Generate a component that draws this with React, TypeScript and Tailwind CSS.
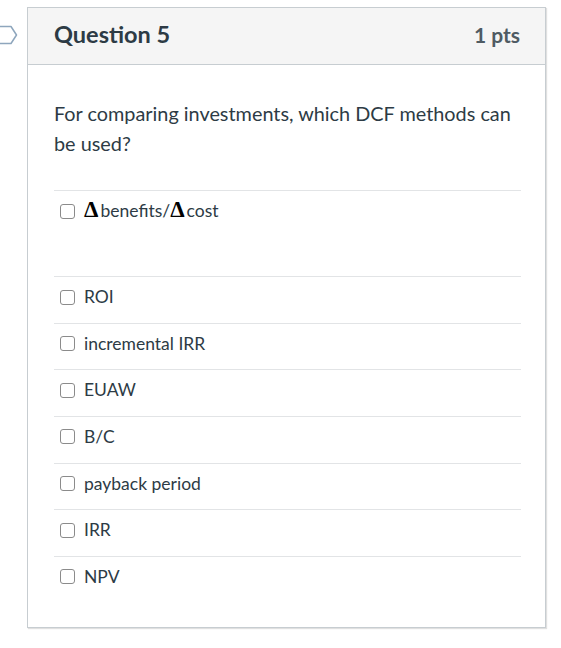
import React from "react";

/* ── Answer options ─────────────────────────────────────────────── */

const options = ["ROI", "incremental IRR", "EUAW", "B/C", "payback period", "IRR", "NPV"];

function Box() {
  return (
    <span className="inline-block h-[15px] w-[15px] shrink-0 rounded-[3px] border-[1.5px] border-[#8b8b8b] bg-white" />
  );
}

function Delta() {
  return (
    <span className="mr-[2px] font-['Liberation_Serif'] text-[23px] font-bold leading-[20px] text-black">Δ</span>
  );
}

function Marker() {
  return (
    <svg className="absolute left-0 top-[25px]" width="18" height="20" viewBox="0 0 18 20" fill="none">
      <path d="M-4 1.5 H11 L16.5 10 L11 18.5 H-4" stroke="#8ea6bd" strokeWidth="1.5" strokeLinejoin="round" />
    </svg>
  );
}

const App = (): JSX.Element => {
  return (
    <div
      className="relative h-[648px] w-[561px] bg-white pt-[7px]"
      style={{ fontFamily: "Lato, 'Noto Sans', sans-serif" }}
    >
      <Marker />
      <div className="ml-[27px] w-[519px] border border-[#c7cdd1] shadow-[1px_1px_1px_rgba(0,0,0,0.12)]">
        {/* ── Header ──── */}
        <div className="flex h-[57px] items-center justify-between border-b border-[#c7cdd1] bg-[#f5f5f5] pb-[2px] pl-[26px] pr-[25px]">
          <h2 className="text-[23.5px] font-bold text-[#2d3b45]">Question 5</h2>
          <span className="text-[21px] font-bold text-[#4f5b63]">1 pts</span>
        </div>

        {/* ── Body ──── */}
        <div className="pb-[24px] pl-[26px] pr-[24px] pt-[33px]">
          <p className="text-[19.85px] leading-[30px] text-[#2d3b45]">
            For comparing investments, which DCF methods can be used?
          </p>

          <div className="mt-[32px]">
            <div className="h-[86px] border-t border-[#e2e4e6] pl-[6px] pt-[9px]">
              <label className="flex items-center gap-[9px] text-[17.5px] leading-[22px] text-[#2d3b45]">
                <Box />
                <span>
                  <Delta />
                  benefits/
                  <Delta />
                  cost
                </span>
              </label>
            </div>
            {options.map((o) => (
              <div key={o} className="h-[46.67px] border-t border-[#e2e4e6] pl-[6px] pt-[9px]">
                <label className="flex items-center gap-[9px] text-[17.5px] leading-[22px] text-[#2d3b45]">
                  <Box />
                  <span>{o}</span>
                </label>
              </div>
            ))}
          </div>
        </div>
      </div>
    </div>
  );
};

export default App;
